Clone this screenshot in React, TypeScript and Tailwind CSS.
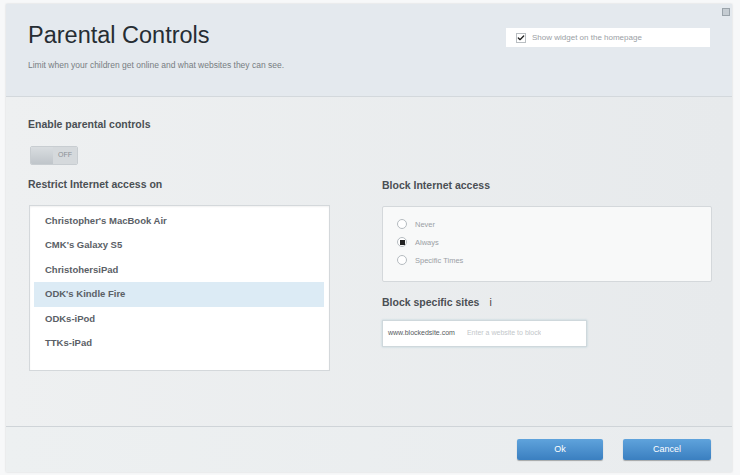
import { Check } from "lucide-react";

const devices = [
  "Christopher's MacBook Air",
  "CMK's Galaxy S5",
  "ChristohersiPad",
  "ODK's Kindle Fire",
  "ODKs-iPod",
  "TTKs-iPad",
];

export default function App() {
  return (
    <div
      className="w-[740px] h-[475px] bg-[#f7f8f9] pt-[4px] pl-[6px] pr-[8px] pb-[3px] overflow-hidden"
      style={{ fontFamily: '"Liberation Sans", Arial, sans-serif' }}
    >
      <div className="relative h-full flex flex-col bg-[#e9ecee] shadow-[0_0_2px_rgba(0,0,0,0.15)]">
        {/* close */}
        <div className="absolute right-[2px] top-[4px] w-[8px] h-[8px] border border-[#9aa3aa] bg-[#c5ccd2]" />

        {/* header */}
        <div className="h-[93px] bg-[#e4e9ee] border-b border-[#d3d8dc] flex justify-between pl-[22px] pr-[22px]">
          <div className="pt-[17px]">
            <h1 className="text-[23.5px] leading-[28px] text-[#262d33]">Parental Controls</h1>
            <p className="mt-[10px] text-[8.5px] text-[#777d82]">Limit when your children get online and what websites they can see.</p>
          </div>
          <div className="mt-[24px] w-[204px] h-[19px] bg-white flex items-center pl-[10px] gap-[6px]">
            <div className="w-[10px] h-[10px] border border-[#b9bec2] flex items-center justify-center">
              <Check size={10} strokeWidth={4} className="text-[#222]" />
            </div>
            <span className="text-[8px] text-[#9aa0a5]">Show widget on the homepage</span>
          </div>
        </div>

        {/* body */}
        <div className="flex-1 bg-gradient-to-r from-[#eef0f1] to-[#e7eaec] flex pl-[22px] pr-[20px] pt-[20px]">
          <div className="w-[354px]">
            <div className="text-[10.5px] font-bold text-[#4a4f54]">Enable parental controls</div>
            <div className="mt-[13px] ml-[2px] w-[48px] h-[19px] flex rounded-[2px] overflow-hidden border border-[#c8cdd1]">
              <div className="w-[22px] bg-gradient-to-b from-[#d9dde0] to-[#bfc5ca]" />
              <div className="flex-1 bg-[#d5d9dc] flex items-center justify-center text-[7px] text-[#8a9096]">OFF</div>
            </div>
            <div className="mt-[12px] text-[10.5px] font-bold text-[#4a4f54]">Restrict Internet access on</div>
            <div className="mt-[12px] ml-[1px] w-[301px] h-[166px] bg-white border border-[#d4d8db] shadow-[inset_0_1px_2px_rgba(0,0,0,0.06)] pt-[3px] pl-[4px] pr-[5px]">
              {devices.map((d) => (
                <div
                  key={d}
                  className={`h-[24.5px] flex items-center pl-[11px] text-[9.5px] font-bold text-[#5a6066] ${
                    d === "ODK's Kindle Fire" ? "bg-[#dcebf5] text-[#4c5a66]" : ""
                  }`}
                >
                  {d}
                </div>
              ))}
            </div>
          </div>

          <div className="flex-1 pt-[61px]">
            <div className="text-[10.5px] font-bold text-[#4a4f54]">Block Internet access</div>
            <div className="mt-[12px] h-[76px] bg-[#f8f9f9] border border-[#d4d8db] rounded-[2px] pl-[14px] pt-[11px] flex flex-col gap-[5px]">
              {["Never", "Always", "Specific Times"].map((o) => (
                <div key={o} className="flex items-center gap-[8px] h-[13px]">
                  <div className="w-[10px] h-[10px] rounded-full border border-[#b5bbc0] bg-white flex items-center justify-center">
                    {o === "Always" && <div className="w-[5px] h-[5px] bg-[#222]" />}
                  </div>
                  <span className="text-[7.5px] text-[#9aa0a5]">{o}</span>
                </div>
              ))}
            </div>
            <div className="mt-[13px] flex items-center gap-[10px] text-[10.5px] font-bold text-[#4a4f54]">
              <span>Block specific sites</span>
              <span className="font-normal text-[#444]">i</span>
            </div>
            <div className="mt-[9px] w-[205px] h-[27px] bg-white border border-[#cfd8dc] shadow-[0_0_2px_rgba(120,170,190,0.4)] flex items-center pl-[5px] gap-[12px]">
              <span className="text-[7px] text-[#555b60]">www.blockedsite.com</span>
              <span className="text-[7px] text-[#c3c7ca] whitespace-nowrap overflow-hidden">Enter a website to block</span>
            </div>
          </div>
        </div>

        {/* footer */}
        <div className="h-[46px] bg-gradient-to-r from-[#edf0f1] to-[#e9ecee] border-t border-[#cfd4d8] flex items-center justify-end gap-[20px] pr-[21px]">
          <button className="w-[86px] h-[21px] rounded-[2px] bg-gradient-to-b from-[#5fa3dc] to-[#3a7fc0] text-white text-[9px] shadow-[0_1px_1px_rgba(0,0,0,0.3)]">Ok</button>
          <button className="w-[88px] h-[21px] rounded-[2px] bg-gradient-to-b from-[#5fa3dc] to-[#3a7fc0] text-white text-[9px] shadow-[0_1px_1px_rgba(0,0,0,0.3)]">Cancel</button>
        </div>
      </div>
    </div>
  );
}
